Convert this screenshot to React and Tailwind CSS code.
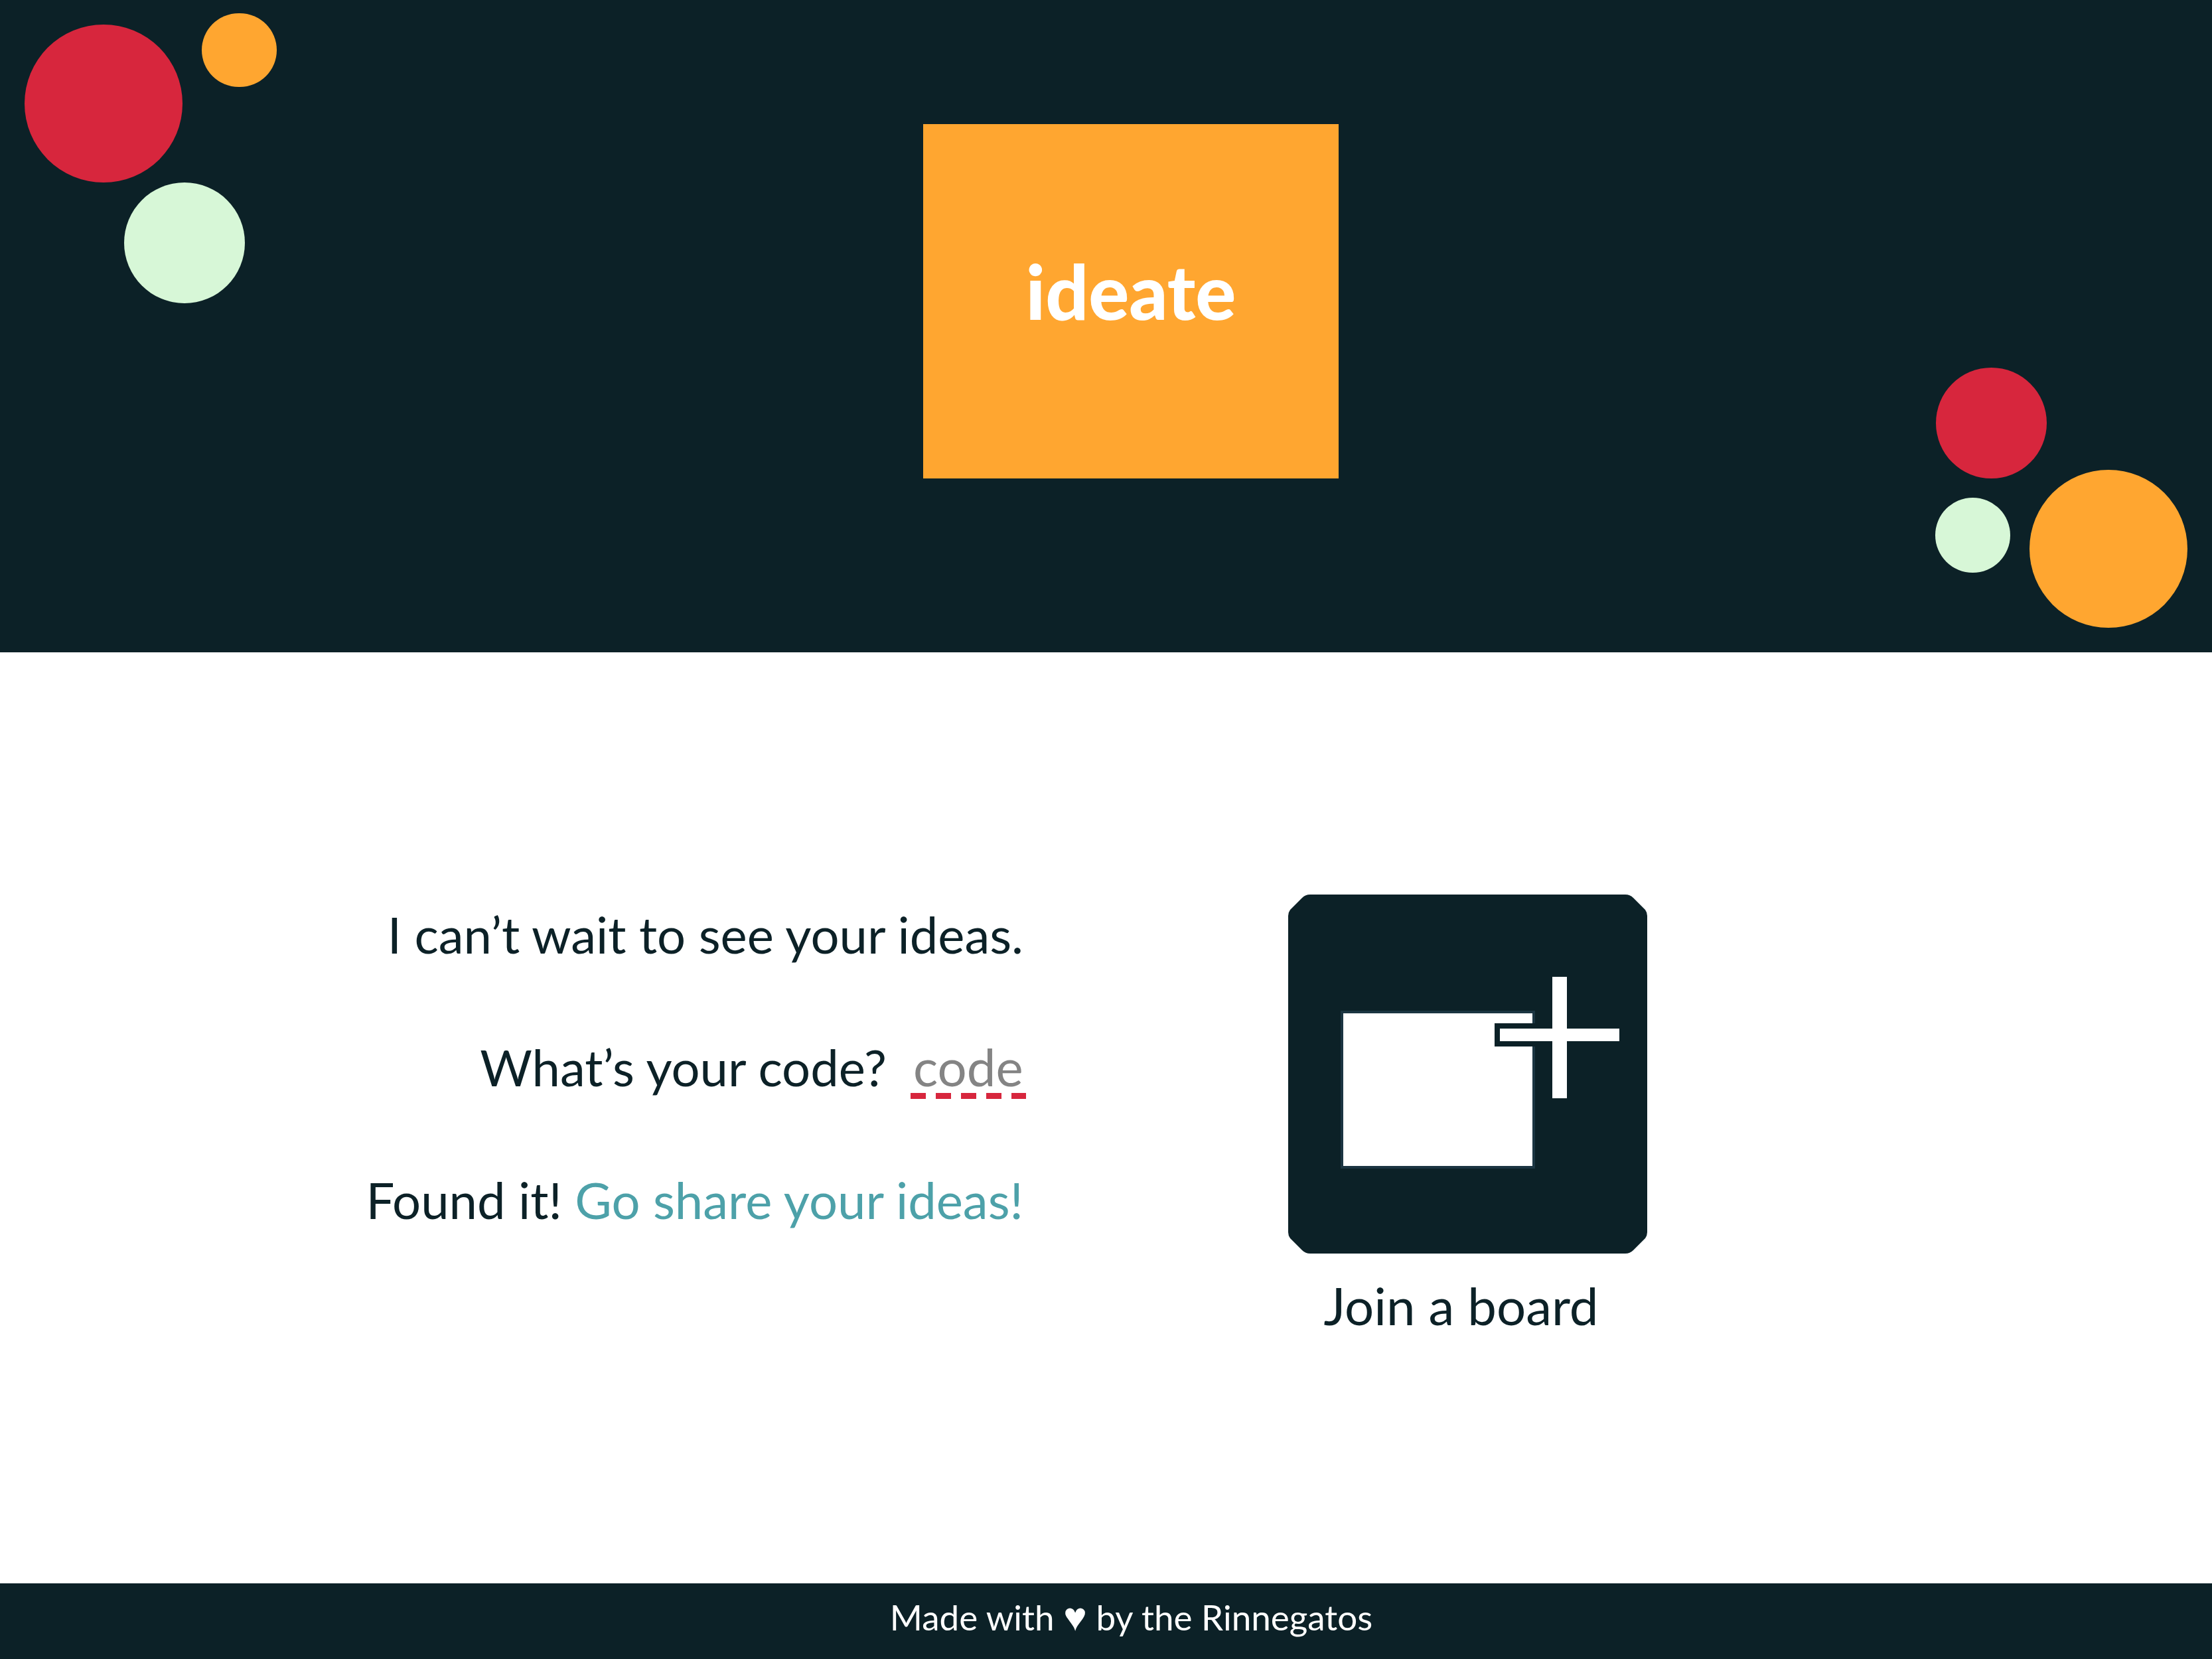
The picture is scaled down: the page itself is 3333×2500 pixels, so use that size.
function Circle({ className }) {
  return <span aria-hidden="true" className={`absolute rounded-full ${className}`} />;
}

function BoardIcon() {
  return (
    <svg viewBox="0 0 541 541" className="size-[541px]" aria-hidden="true">
      <path
        fill="#0c2127"
        d="M33 0H508Q515 0 520 5L538 23Q541 27 541 32V509Q541 514 538 518L520 536Q515 541 508 541H33Q26 541 21 536L3 518Q0 514 0 509V32Q0 27 3 23L21 5Q26 0 33 0Z"
      />
      <rect x="81" y="177" width="289" height="234" fill="#fff" stroke="#1b3542" strokeWidth="4" />
      <rect x="311" y="194" width="188" height="35" fill="#0c2127" />
      <rect x="319" y="202" width="180" height="19" fill="#fff" />
      <rect x="398" y="124" width="22" height="183" fill="#fff" />
    </svg>
  );
}

export default function App() {
  return (
    <div className="flex min-h-screen flex-col bg-white font-['Lato',sans-serif] text-[#0c2127]">
      <header className="relative flex justify-center overflow-hidden bg-[#0c2127] pt-[187px] pb-[262px] pl-[75px]">
        <Circle className="top-[37px] left-[37px] size-[238px] bg-[#d7263d]" />
        <Circle className="top-[20px] left-[304px] h-[111px] w-[113px] bg-[#ffa630]" />
        <Circle className="top-[275px] left-[187px] size-[182px] bg-[#d7f7d7]" />
        <Circle className="right-[249px] bottom-[262px] size-[167px] bg-[#d7263d]" />
        <Circle className="right-[304px] bottom-[120px] size-[113px] bg-[#d7f7d7]" />
        <Circle className="right-[37px] bottom-[37px] size-[238px] bg-[#ffa630]" />
        <div className="flex h-[534px] w-[626px] items-center justify-center bg-[#ffa630] pb-8">
          <h1 className="text-[114px] leading-[134px] font-black text-white">ideate</h1>
        </div>
      </header>

      <main className="grid flex-1 grid-cols-2 content-center items-start gap-[395px] pl-[154px]">
        <form className="flex flex-col items-end gap-[100px] pt-2.5 text-[76px] leading-[100px] whitespace-nowrap">
          <p className="pr-1">I can’t wait to see your ideas.</p>
          <div className="flex h-[100px] items-start gap-9">
            <label htmlFor="code">What’s your code?</label>
            <input
              id="code"
              type="text"
              placeholder="code"
              className="h-[98px] w-[174px] bg-[repeating-linear-gradient(to_right,#d7263d_0_23px,transparent_23px_38px)] bg-[length:100%_9px] bg-bottom bg-no-repeat px-1 text-[78px] outline-none placeholder:text-[#848484]"
            />
          </div>
          <p className="pr-1">
            Found it!{" "}
            <a href="#board" className="text-[#4da1a9]">
              Go share your ideas!
            </a>
          </p>
        </form>

        <figure className="w-[541px] pb-1">
          <BoardIcon />
          <figcaption className="mt-7 pr-5 text-center text-[78px] leading-[100px]">Join a board</figcaption>
        </figure>
      </main>

      <footer className="bg-[#0c2127] pt-[13px] pb-[25px] pl-[76px] text-center text-[53px] leading-[76px] text-white">
        Made with <span className="text-[60px] leading-none">♥</span> by the Rinnegatos
      </footer>
    </div>
  );
}
